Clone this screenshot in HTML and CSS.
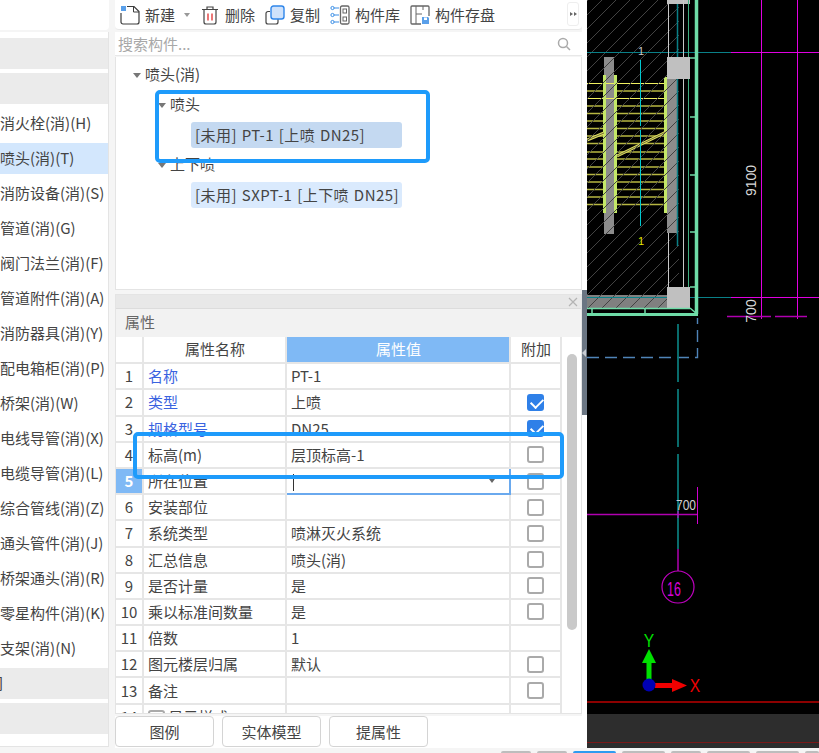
FILE: index.html
```html
<!DOCTYPE html>
<html lang="zh">
<head>
<meta charset="utf-8">
<title>构件</title>
<link rel="stylesheet" href="styles.css">
</head>
<body>
<div class="app">
  <div class="row">
    <aside class="nav">
      <div class="nav-top"></div>
      <div class="nav-body">
        <div class="band"></div>
        <div class="band"></div>
        <ul class="nav-list">
          <li>消火栓(消)(H)</li>
          <li class="sel">喷头(消)(T)</li>
          <li>消防设备(消)(S)</li>
          <li>管道(消)(G)</li>
          <li>阀门法兰(消)(F)</li>
          <li>管道附件(消)(A)</li>
          <li>消防器具(消)(Y)</li>
          <li>配电箱柜(消)(P)</li>
          <li>桥架(消)(W)</li>
          <li>电线导管(消)(X)</li>
          <li>电缆导管(消)(L)</li>
          <li>综合管线(消)(Z)</li>
          <li>通头管件(消)(J)</li>
          <li>桥架通头(消)(R)</li>
          <li>零星构件(消)(K)</li>
          <li>支架(消)(N)</li>
        </ul>
        <div class="band band-low">间</div>
        <div class="band"></div>
      </div>
    </aside>

    <main class="mid">
      <div class="toolbar">
        <span class="tool">
          <svg class="ico" viewBox="0 0 20 20"><path d="M7 1.500h7l5 5V17a2 2 0 0 1-2 2H3a2 2 0 0 1-2-2V8" fill="none" stroke="#3c3c3c" stroke-width="1.200"/><path d="M13.500 1.500v5.500H19" fill="none" stroke="#3c3c3c" stroke-width="1"/><rect x="1" y="1" width="5" height="5" fill="#5aa0ea"/></svg>
          新建<i class="caret"></i>
        </span>
        <span class="tool">
          <svg class="ico" viewBox="0 0 20 20"><path d="M2 4.500h16M7 4.500V2h6v2.500M4 4.500V17a2 2 0 0 0 2 2h8a2 2 0 0 0 2-2V4.500" fill="none" stroke="#444" stroke-width="1.200"/><path d="M8 8.500v7M12 8.500v7" stroke="#e03030" stroke-width="1.300"/></svg>
          删除
        </span>
        <span class="tool">
          <svg class="ico" viewBox="0 0 20 20"><path d="M5 6.500H3a2 2 0 0 0-2 2V17a2 2 0 0 0 2 2h8a2 2 0 0 0 2-2v-3" fill="none" stroke="#444" stroke-width="1.200"/><rect x="6" y="1" width="13" height="13" rx="2.500" fill="#cfe2fb" stroke="#2f86ea" stroke-width="1.400"/></svg>
          复制
        </span>
        <span class="tool">
          <svg class="ico" viewBox="0 0 20 20"><rect x="10.500" y="1" width="8.500" height="18" rx="1.500" fill="none" stroke="#666" stroke-width="1.300"/><rect x="13" y="4" width="3.500" height="4" fill="none" stroke="#666"/><rect x="13" y="12" width="3.500" height="4" fill="none" stroke="#666"/><path d="M3 3h6M3 10h6M3 17h6" stroke="#3a8ee6" stroke-width="1.200"/><circle cx="2.500" cy="3" r="1.600" fill="#fff" stroke="#3a8ee6"/><circle cx="2.500" cy="10" r="1.600" fill="#fff" stroke="#3a8ee6"/><circle cx="2.500" cy="17" r="1.600" fill="#fff" stroke="#3a8ee6"/></svg>
          构件库
        </span>
        <span class="tool">
          <svg class="ico" viewBox="0 0 20 20"><path d="M11 19H2a1 1 0 0 1-1-1V2a1 1 0 0 1 1-1h16a1 1 0 0 1 1 1v9" fill="none" stroke="#666" stroke-width="1.300"/><path d="M6 1v18M6 9h6M13 1v4" fill="none" stroke="#666"/><path d="M12 12h6l1 1v6h-7z" fill="#5aa0ea"/><rect x="14" y="12.500" width="3" height="2.500" fill="#fff"/></svg>
          构件存盘
        </span>
        <span class="more"><i></i><i></i></span>
      </div>

      <div class="search">
        <span>搜索构件...</span>
        <svg class="search-ico" viewBox="0 0 14 14"><circle cx="6" cy="6" r="4.500" fill="none" stroke="#aaa" stroke-width="1.500"/><path d="M9.500 9.500 13 13" stroke="#aaa" stroke-width="1.500"/></svg>
      </div>

      <div class="tree">
        <div class="node n0"><i class="tri"></i><span class="label">喷头(消)</span></div>
        <div class="node n1"><i class="tri"></i><span class="label">喷头</span></div>
        <div class="node n2"><span class="chip chip-on">[未用] PT-1 [上喷 DN25]</span></div>
        <div class="node n1"><i class="tri"></i><span class="label">上下喷</span></div>
        <div class="node n2"><span class="chip">[未用] SXPT-1 [上下喷 DN25]</span></div>
      </div>

      <section class="props">
        <div class="props-bar"><svg class="close" viewBox="0 0 10 10"><path d="M1 1 9 9M9 1 1 9" stroke="#b4b4b4" stroke-width="1.200"/></svg></div>
        <div class="props-title">属性</div>
        <div class="props-body">
          <div class="table-clip">
            <table class="grid">
              <thead>
                <tr><th class="c-no"></th><th class="c-name">属性名称</th><th class="c-val head-on">属性值</th><th class="c-add">附加</th></tr>
              </thead>
              <tbody>
                <tr><td class="no">1</td><td class="link">名称</td><td>PT-1</td><td></td></tr>
                <tr><td class="no">2</td><td class="link">类型</td><td>上喷</td><td class="ck"><span class="box on"></span></td></tr>
                <tr><td class="no">3</td><td class="link">规格型号</td><td>DN25</td><td class="ck"><span class="box on"></span></td></tr>
                <tr><td class="no">4</td><td>标高(m)</td><td>层顶标高-1</td><td class="ck"><span class="box"></span></td></tr>
                <tr><td class="no no-on">5</td><td>所在位置</td><td class="editing"><span class="cursor"></span><i class="drop"></i></td><td class="ck"><span class="box"></span></td></tr>
                <tr><td class="no">6</td><td>安装部位</td><td></td><td class="ck"><span class="box"></span></td></tr>
                <tr><td class="no">7</td><td>系统类型</td><td>喷淋灭火系统</td><td class="ck"><span class="box"></span></td></tr>
                <tr><td class="no">8</td><td>汇总信息</td><td>喷头(消)</td><td class="ck"><span class="box"></span></td></tr>
                <tr><td class="no">9</td><td>是否计量</td><td>是</td><td class="ck"><span class="box"></span></td></tr>
                <tr><td class="no">10</td><td>乘以标准间数量</td><td>是</td><td class="ck"><span class="box"></span></td></tr>
                <tr><td class="no">11</td><td>倍数</td><td>1</td><td></td></tr>
                <tr><td class="no">12</td><td>图元楼层归属</td><td>默认</td><td class="ck"><span class="box"></span></td></tr>
                <tr><td class="no">13</td><td>备注</td><td></td><td class="ck"><span class="box"></span></td></tr>
                <tr><td class="no">14</td><td><span class="box small"></span> 显示样式</td><td></td><td></td></tr>
              </tbody>
            </table>
          </div>
          <div class="scroll"><div class="thumb"></div></div>
        </div>
      </section>

      <div class="actions">
        <button class="btn">图例</button>
        <button class="btn">实体模型</button>
        <button class="btn">提属性</button>
      </div>

      <div class="mark mark-a"></div>
      <div class="mark mark-b"></div>
    </main>

    <div class="gutter"><div class="gutter-grip"><i class="grip-arrow"></i></div></div>

    <div class="cad">
      <svg class="cad-svg" width="232" height="748" viewBox="587 0 232 748">
        <defs>
          <pattern id="hatch" width="14" height="14" patternUnits="userSpaceOnUse">
            <path d="M-2 16 16 -2" stroke="#424242" stroke-width="1"/>
          </pattern>
        </defs>
        <rect x="587" y="0" width="232" height="748" fill="#000"/>

        <!-- stair treads and columns, below the hatch -->
        <rect x="604" y="57" width="10" height="177" fill="#8c8c8c"/>
        <rect x="667" y="79" width="11" height="154" fill="#8c8c8c"/>
        <rect x="587" y="295" width="80" height="13" fill="#808080"/>
        <g stroke="#b6b642" stroke-width="1.500">
          <path d="M587 91H603M617 91H665M587 106H603M617 106H665M587 113.500H603M617 113.500H665M587 121H603M617 121H665M587 128.500H603M617 128.500H665M587 136H603M617 136H665M587 143.500H603M617 143.500H665M587 152H603M617 152H665M587 159H603M617 159H665M587 167H603M617 167H665M587 174.500H603M617 174.500H665M587 182H603M617 182H665M587 189.500H603M617 189.500H665M587 197H603M617 197H665M587 204.500H603M617 204.500H665"/>
        </g>
        <path d="M587 83.500H665M587 98.500H665" stroke="#f0f060" stroke-width="1"/>
        <path d="M604.500 75V213M615.500 75V213M665.500 77V213" stroke="#c4e868" stroke-width="3"/>
        <path d="M587 140 604 133M617 156 666 132" stroke="#e0e060" stroke-width="3"/>
        <path d="M587 140 604 133M617 156 666 132" stroke="#222" stroke-width="0.600"/>

        <rect x="587" y="0" width="92" height="308" fill="url(#hatch)"/>

        <!-- grid and dimension lines -->
        <path d="M587 52.500H731M587 297.500H667" stroke="#0a8088" stroke-width="1"/>
        <path d="M690 52.500H731M690 297.500H731" stroke="#0a8088" stroke-width="1"/>
        <path d="M731 52.500H819M731 297.500H819M761.500 0V319M797.500 0V319" stroke="#e000e0" stroke-width="1"/>
        <path d="M727 316.500H771M775 316.500H807" stroke="#b000b0" stroke-width="1.500"/>
        <path d="M640.500 60V126M640.500 130V226" stroke="#00c8d0" stroke-width="1"/>

        <!-- columns and walls -->
        <rect x="667" y="0" width="23" height="4" fill="#c0c0c0"/>
        <rect x="667" y="57" width="23" height="22" fill="#c0c0c0"/>
        <rect x="667" y="287" width="23" height="22" fill="#c0c0c0"/>
        <path d="M668.500 4V57M668.500 233V287" stroke="#c8c8c8" stroke-width="1"/>
        <path d="M683.500 0V57M683.500 79V287" stroke="#c8c8c8" stroke-width="1"/>
        <path d="M677.500 4V57M677.500 79V246" stroke="#0a7f86" stroke-width="1.500"/>
        <path d="M688.500 0V57M688.500 79V287" stroke="#3fae80" stroke-width="1" />
        <path d="M696.500 0V314" stroke="#6fdca8" stroke-width="3.500"/>
        <path d="M690 58H695M690 117H695M690 175H695M690 232H695M690 287H695" stroke="#6fdca8" stroke-width="1.500"/>
        <path d="M587 314.500H698" stroke="#6fdca8" stroke-width="3"/>
        <path d="M587 308.500H690" stroke="#6fdca8" stroke-width="1.500"/>
        <path d="M592 309v5M645 309v5M690 308 697 314" stroke="#6fdca8" stroke-width="1.500"/>
        <text x="638" y="245" class="t-small" fill="#e6e600">1</text>
        <text x="638" y="55" class="t-small" fill="#c8c8c8">1</text>

        <!-- dashed outline below the plan -->
        <path d="M587 357.500H697.500V318" fill="none" stroke="#4f84b8" stroke-width="1.400" stroke-dasharray="12 6"/>

        <!-- axis 16 -->
        <path d="M678 324V382M678 389V447M678 454V549" stroke="#0a7878" stroke-width="1.800"/>
        <path d="M678 549V571" stroke="#b000b0" stroke-width="1.500"/>
        <circle cx="678" cy="587" r="16" fill="none" stroke="#c000c0" stroke-width="1.200"/>
        <text class="t-num" fill="#d800d8" text-anchor="middle" transform="translate(674 596) scale(.62 1)">16</text>
        <path d="M587 514.500H697" stroke="#b000b0" stroke-width="1.500"/>
        <path d="M697.500 487V524" stroke="#d000d0" stroke-width="1"/>
        <path d="M678 511v7M697.500 511v7" stroke="#d000d0" stroke-width="1"/>
        <text class="t-dim" text-anchor="middle" fill="#d0d0d0" transform="translate(686 510) scale(.86 1)">700</text>
        <text class="t-dim" fill="#d8d8d8" text-anchor="middle" transform="translate(756 180.500) rotate(-90)">9100</text>
        <text class="t-dim" fill="#d8d8d8" text-anchor="middle" transform="translate(756 311) rotate(-90)">700</text>

        <!-- coordinate gizmo -->
        <path d="M649 680V662" stroke="#00e000" stroke-width="5"/>
        <path d="M649 649 656 663H642Z" fill="#00e000"/>
        <path d="M655 685.500H673" stroke="#f00000" stroke-width="5"/>
        <path d="M687 685.500 672 679V692Z" fill="#f00000"/>
        <circle cx="649" cy="685" r="6.500" fill="#0000b4"/>
        <text class="t-axis" fill="#00e000" text-anchor="middle" transform="translate(649 647) scale(.82 1)">Y</text>
        <text class="t-axis" fill="#f00000" text-anchor="middle" transform="translate(695 692) scale(.82 1)">X</text>

        <!-- bottom bands -->
        <rect x="587" y="701" width="232" height="2" fill="#8c0000"/>
        <rect x="587" y="714" width="232" height="34" fill="#2d2d2d"/>
        <rect x="587" y="742" width="232" height="1" fill="#7a1818"/>
      </svg>
    </div>
  </div>
  <div class="tabs">
    <span class="tab t-s"></span><span class="tab t-s"></span><span class="tab t-l tab-on"></span><span class="tab t-l"></span><span class="tab t-s"></span><span class="tab t-l"></span><span class="tab t-l"></span><span class="tab t-e"></span>
  </div>
</div>
</body>
</html>
```
FILE: styles.css
```css
* { box-sizing: border-box; }
html, body { margin: 0; padding: 0; }
body {
  width: 819px;
  height: 753px;
  overflow: hidden;
  background: #f5f5f5;
  font-family: "Noto Sans CJK SC", "Liberation Sans", sans-serif;
  font-size: 15px;
  color: #444;
}
.app { display: flex; flex-direction: column; height: 753px; }
.row { display: flex; height: 748px; flex: none; }

/* left nav */
.nav {
  width: 115px;
  flex: none;
  padding-right: 6px;
  display: flex;
  flex-direction: column;
  gap: 2px;
}
.nav-top { height: 30px; background: #fff; border-radius: 0 0 4px 0; }
.nav-body { flex: none; height: 715px; background: #fff; padding-top: 6px; border-right: 1px solid #e4e4e4; border-bottom: 1px solid #e4e4e4; }
.band { height: 31px; background: #ebebeb; margin-bottom: 4px; line-height: 29px; overflow: hidden; text-indent: -12px; }
.band-low { margin-top: 2px; }
.nav-list { list-style: none; margin: -2px 0 0; padding: 0; }
.nav-list li { height: 35px; line-height: 33px; white-space: nowrap; overflow: hidden; color: #444; }
.nav-list li.sel { background: #d3e7fd; height: 31px; line-height: 29px; margin: 2px 0; }

/* middle */
.mid { position: relative; width: 467px; flex: none; display: flex; flex-direction: column; gap: 1px; }
.toolbar { height: 30px; background: #fff; border-radius: 0 0 4px 4px; border-bottom: 1px solid #e8e8e8; display: flex; align-items: center; padding-left: 5px; gap: 10px; position: relative; flex: none; }
.tool { display: inline-flex; align-items: center; gap: 5px; white-space: nowrap; color: #444; line-height: 26px; }
.ico { width: 20px; height: 20px; flex: none; }
.caret { width: 0; height: 0; border: 3.500px solid transparent; border-top: 4px solid #999; border-bottom: 0; margin-left: 4px; }
.more { position: absolute; right: 3px; top: 2px; width: 12px; height: 24px; background: #fff; border: 1px solid #eee; border-radius: 3px; display: flex; align-items: center; justify-content: center; gap: 1px; }
.more i { width: 0; height: 0; border: 2.500px solid transparent; border-left: 3px solid #666; border-right: 0; }
.search { height: 24px; background: #fff; display: flex; align-items: center; justify-content: space-between; padding: 0 11px 0 3px; color: #a8a8a8; flex: none; margin-top: 1px; border-bottom: 1px solid #e8e8e8; }
.search-ico { width: 14px; height: 14px; }
.tree { height: 233px; background: #fff; padding-top: 3px; flex: none; border: 1px solid #e4e4e4; border-top: 0; }
.node { height: 30px; display: flex; align-items: center; white-space: nowrap; color: #444; }
.label { padding-bottom: 4px; }
.n0 { padding-left: 17px; }
.n1 { padding-left: 42px; }
.n2 { padding-left: 75px; }
.tri { width: 0; height: 0; border: 4px solid transparent; border-top: 5px solid #777; border-bottom: 0; margin-right: 4px; }
.chip { height: 26px; line-height: 26px; padding: 0 0 0 4px; width: 211px; background: #daeafd; border-radius: 3px; color: #444; word-spacing: 1px; letter-spacing: .45px; }
.chip-on { background: #c4d9f1; }

/* props */
.props { height: 420px; margin-top: 3px; flex: none; background: #fff; border: 1px solid #e4e4e4; display: flex; flex-direction: column; overflow: hidden; }
.props-bar { height: 14px; background: #e8e8e8; border-bottom: 1px solid #dcdcdc; position: relative; flex: none; }
.close { position: absolute; right: 3px; top: 2px; width: 10px; height: 10px; }
.props-title { height: 28px; line-height: 25px; background: #f2f2f2; padding-left: 9px; color: #666; flex: none; }
.props-body { display: flex; flex: 1; min-height: 0; }
.table-clip { width: 446px; flex: none; overflow: hidden; }
.grid { width: 445px; table-layout: fixed; border-collapse: collapse; }
.grid th, .grid td { height: 26.200px; padding: 0 3px 0 4px; border: 2px solid #e6e6e6; white-space: nowrap; overflow: hidden; font-weight: 400; color: #444; line-height: 20px; }
.grid th { padding-bottom: 2px; }
.grid tr:first-child th { border-top: 0; }
.grid tr > :first-child { border-left: 0; }
.c-no { width: 27px; }
.c-name { width: 143px; }
.c-val { width: 224px; }
.c-add { width: 51px; }
.grid th { text-align: center; }
.grid th.head-on { background: #7fb9f5; color: #fff; }
.grid td.no { text-align: center; padding: 0; }
.grid td.no-on { background: #7fb9f5; color: #fff; font-weight: 700; }
.grid td.link { color: #3a63e0; }
.grid td.editing { border: 2px solid #6aa9ee; position: relative; padding-bottom: 0; }
.cursor { display: inline-block; width: 1px; height: 17px; background: #333; vertical-align: middle; margin-left: 2px; }
.drop { position: absolute; right: 14px; top: 10px; width: 0; height: 0; border: 3.500px solid transparent; border-top: 4px solid #666; border-bottom: 0; }
.grid td.ck { text-align: center; padding: 0; line-height: 0; }
.box { display: inline-block; width: 17px; height: 17px; border: 2px solid #aaa; border-radius: 3px; background: #fff; vertical-align: middle; position: relative; }
.box.on { background: #2f80e8; border-color: #2f80e8; }
.box.on::after { content: ""; position: absolute; left: 3.500px; top: 0; width: 6px; height: 10px; border: solid #fff; border-width: 0 2px 2px 0; transform: rotate(45deg); }
.scroll { width: 19px; flex: none; padding-top: 17px; padding-left: 5px; }
.thumb { width: 10px; height: 276px; background: #c9c9c9; border-radius: 5px; }

.actions { height: 32px; display: flex; gap: 8px; flex: none; margin-top: 1px; background: #fff; }
.btn { width: 99px; height: 31px; background: #fff; border: 1px solid #d4d4d4; border-radius: 4px; font: 15px "Noto Sans CJK SC", sans-serif; color: #444; padding: 0; }

.mark { position: absolute; border: 4px solid #1e9bfb; border-radius: 5px; }
.mark-a { left: 40px; top: 90px; width: 275px; height: 73px; }
.mark-b { left: 18px; top: 432px; width: 431px; height: 47px; }

.gutter { width: 5px; flex: none; background: #fff; position: relative; }
.gutter-grip { position: absolute; left: 0; top: 290px; width: 5px; height: 125px; background: #6b7683; display: flex; align-items: center; }
.grip-arrow { width: 0; height: 0; border: 4px solid transparent; border-right: 4px solid #c8ccd2; border-left: 0; }

/* cad */
.cad { width: 232px; flex: none; }
.cad-svg { display: block; }
.t-small { font: 11px "Liberation Sans", sans-serif; }
.t-num { font: 20px "Liberation Sans", sans-serif; }
.t-dim { font: 14px "Liberation Sans", sans-serif; }
.t-axis { font: 19px "Liberation Sans", sans-serif; }

.tabs { height: 5px; display: flex; align-items: flex-end; justify-content: flex-end; gap: 6px; }
.tab { height: 2px; background: #bdbdbd; border-radius: 2px 2px 0 0; }
.t-s { width: 30px; }
.t-l { width: 43px; }
.t-e { width: 14px; }
.tab-on { background: #2f9bf0; }
```
